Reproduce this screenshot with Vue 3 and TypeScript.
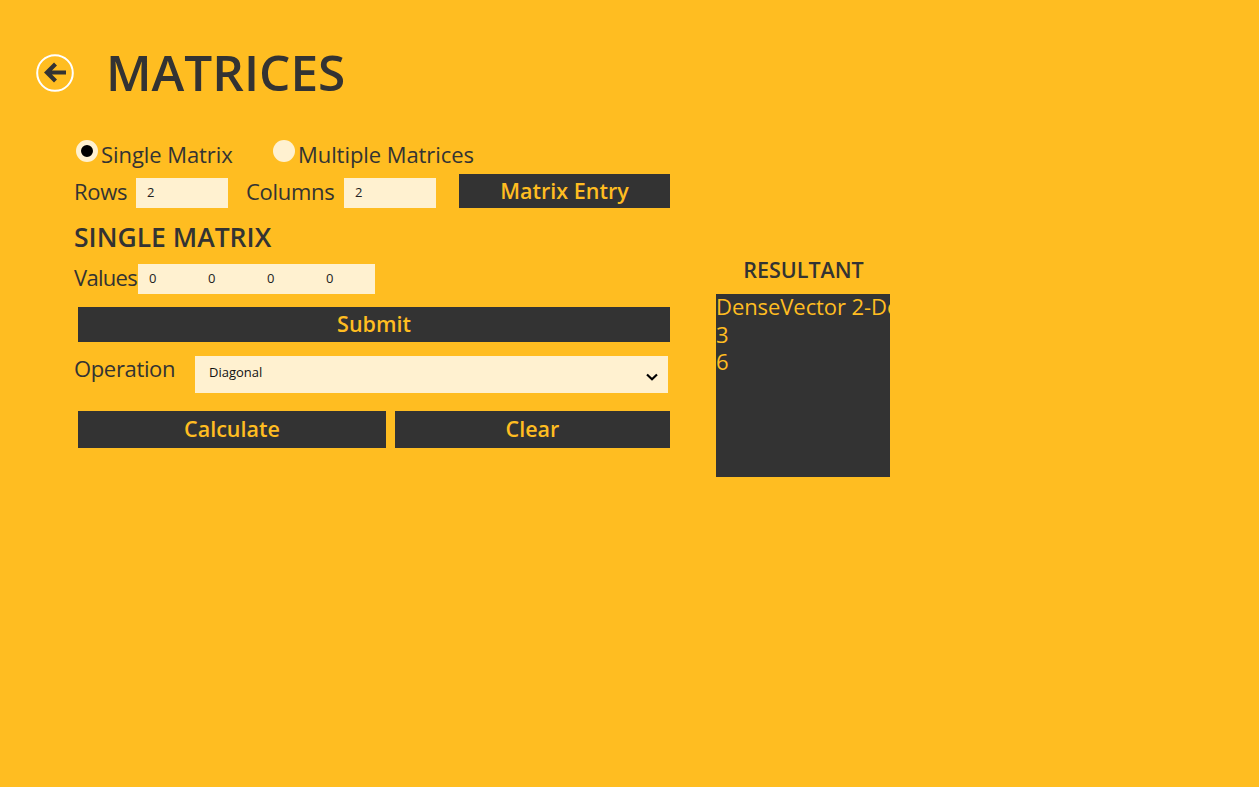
<script setup lang="ts">
const values: string[] = ['0', '0', '0', '0']
</script>

<template>
  <div class="page">
    <header class="header">
      <button class="back" aria-label="Back">
        <svg width="38" height="38" viewBox="0 0 38 38">
          <circle cx="19" cy="19" r="17.8" fill="none" stroke="#fff" stroke-width="2" />
          <path d="M30 18.500H12M19.500 10 11 18.500l8.500 8.500" fill="none" stroke="#333" stroke-width="4.200" />
        </svg>
      </button>
      <h1 class="title">MATRICES</h1>
    </header>

    <main class="content">
      <section class="left">
        <div class="radios">
          <label class="radio first"><span class="dot on"></span>Single Matrix</label>
          <label class="radio"><span class="dot"></span>Multiple Matrices</label>
        </div>

        <div class="size-row">
          <span class="label rows-label">Rows</span>
          <input class="field" value="2" />
          <span class="label cols-label">Columns</span>
          <input class="field" value="2" />
          <button class="btn entry">Matrix Entry</button>
        </div>

        <h2 class="section">SINGLE MATRIX</h2>

        <div class="values-row">
          <span class="label values-label">Values</span>
          <div class="values">
            <input v-for="(v, i) in values" :key="i" class="cell" :value="v" />
          </div>
        </div>

        <button class="btn submit">Submit</button>

        <div class="op-row">
          <span class="label op-label">Operation</span>
          <div class="select">
            <span>Diagonal</span>
            <svg width="12" height="8" viewBox="0 0 12 8">
              <path d="M1 1.500 6 6.200 11 1.500" fill="none" stroke="#000" stroke-width="2.200" />
            </svg>
          </div>
        </div>

        <div class="actions">
          <button class="btn calc">Calculate</button>
          <button class="btn clear">Clear</button>
        </div>
      </section>

      <aside class="right">
        <h2 class="result-title">RESULTANT</h2>
        <div class="result">
          <div class="line">DenseVector 2-Double</div>
          <div class="line">3</div>
          <div class="line">6</div>
        </div>
      </aside>
    </main>
  </div>
</template>

<style>
html,
body {
  margin: 0;
  background: #ffbd21;
}
</style>

<style scoped>
.page {
  box-sizing: border-box;
  width: 1259px;
  height: 787px;
  overflow: hidden;
  background: #ffbd21;
  color: #333;
  font-family: "Open Sans", "Noto Sans", sans-serif;
}
.header {
  display: flex;
  align-items: center;
  height: 73px;
  padding: 36px 0 0 36px;
}
.back {
  width: 38px;
  height: 38px;
  padding: 0;
  border: 0;
  background: none;
  line-height: 0;
}
.title {
  margin: 0 0 0 32px;
  font-size: 49.500px;
  font-weight: 600;
  line-height: 73px;
}
.content {
  display: flex;
  padding: 31px 0 0 74px;
}
.left {
  width: 596px;
}
.radios {
  display: flex;
  height: 34px;
  padding-left: 2px;
}
.radio {
  display: flex;
  font-size: 22px;
  line-height: 28px;
  letter-spacing: -0.07px;
}
.radio.first {
  width: 197px;
}
.dot {
  box-sizing: border-box;
  width: 22px;
  height: 22px;
  margin: 0 3px 0 0;
  border-radius: 50%;
  background: #fff1d0;
}
.dot.on {
  border: 5px solid #fff1d0;
  background: #000;
}
.label {
  font-size: 22px;
  line-height: 30px;
  letter-spacing: -0.3px;
}
.size-row {
  display: flex;
  align-items: flex-start;
  height: 34px;
}
.size-row .label {
  margin-top: 2px;
}
.rows-label {
  width: 62px;
}
.cols-label {
  width: 98px;
  margin-left: 18px;
}
.field {
  box-sizing: border-box;
  width: 92px;
  height: 30px;
  margin-top: 4px;
  padding: 0 11px 2px;
  border: 0;
  border-radius: 0;
  background: #fff1d0;
  color: #222;
  font-family: inherit;
  font-size: 13px;
}
.btn {
  display: block;
  padding: 0 0 2px;
  border: 0;
  border-radius: 0;
  background: #333;
  color: #ffbd21;
  font-family: inherit;
  font-size: 21.500px;
  font-weight: 600;
}
.entry {
  width: 211px;
  height: 34px;
  margin-left: 23px;
}
.section {
  margin: 11px 0 9px;
  font-size: 26.500px;
  font-weight: 600;
  line-height: 36px;
}
.values-row {
  display: flex;
  height: 30px;
}
.label.values-label {
  width: 64px;
  margin-top: -2px;
  letter-spacing: -0.7px;
}
.values {
  display: flex;
  width: 237px;
  height: 30px;
  background: #fff1d0;
}
.cell {
  box-sizing: border-box;
  width: 59px;
  min-width: 0;
  padding: 0 0 2px 11px;
  border: 0;
  background: transparent;
  color: #222;
  font-family: inherit;
  font-size: 13px;
}
.submit {
  width: 592px;
  height: 35px;
  margin: 13px 0 0 4px;
}
.op-row {
  display: flex;
  margin-top: 14px;
}
.label.op-label {
  width: 121px;
  margin-top: -1px;
  line-height: 26px;
  letter-spacing: -0.35px;
}
.select {
  box-sizing: border-box;
  display: flex;
  align-items: center;
  justify-content: space-between;
  width: 473px;
  height: 37px;
  padding: 0 10px 0 14px;
  background: #fff1d0;
  color: #111;
  font-size: 13px;
}
.select span {
  margin-top: -6px;
}
.select svg {
  margin-top: 5px;
}
.actions {
  display: flex;
  gap: 9px;
  margin: 18px 0 0 4px;
}
.calc {
  width: 308px;
  height: 37px;
}
.clear {
  width: 275px;
  height: 37px;
}
.right {
  width: 174px;
  margin: 120px 0 0 46px;
}
.result-title {
  height: 35px;
  margin: 0;
  padding-left: 1px;
  font-size: 21.500px;
  font-weight: 600;
  line-height: 19px;
  text-align: center;
}
.result {
  box-sizing: border-box;
  height: 183px;
  overflow: hidden;
  margin-top: -1px;
  background: #333;
  color: #ffbd21;
  font-size: 22px;
  line-height: 27.500px;
  white-space: nowrap;
  letter-spacing: -0.07px;
}
.line:first-child {
  margin-top: -1px;
}
</style>
